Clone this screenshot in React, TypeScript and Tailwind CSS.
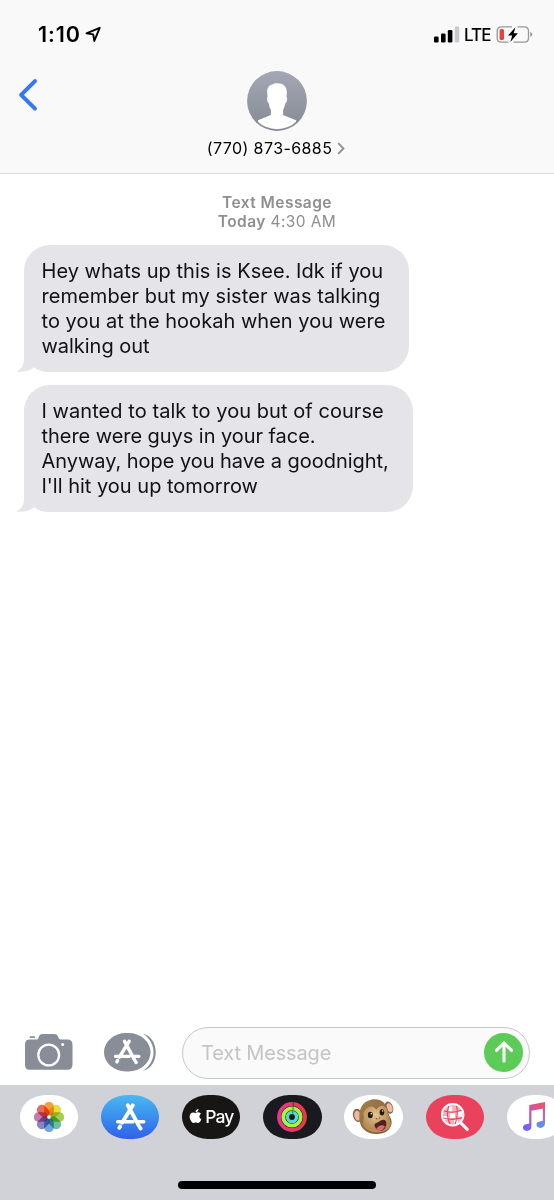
import type { ReactNode } from "react";
import { FaApple } from "react-icons/fa";

const petals = ["#f79320", "#ead725", "#9bc83c", "#5bb795", "#5d9ddb", "#7c78bb", "#bd6ba8", "#e8574a"];

function StatusBar() {
  return (
    <div className="flex h-[68px] items-center justify-between pl-[38px] pr-[21px]">
      <div className="flex items-center">
        <span className="w-[43px] whitespace-nowrap text-[21.5px] font-semibold leading-[25px] tracking-[0.9px]">1:10</span>
        <svg className="ml-[4px] h-[17px] w-[17px]" viewBox="0 0 17 17" fill="none">
          <path d="M1.5 7.4 14.7 1.8 9.3 14.9 8.2 8.4Z" stroke="#000" strokeWidth="1.9" strokeLinejoin="round" />
        </svg>
      </div>
      <div className="flex items-center">
        <svg className="h-[17px] w-[27px]" viewBox="0 0 27 17">
          <rect x="1" y="10.5" width="4.6" height="6" rx="1.3" />
          <rect x="8" y="7.5" width="4.6" height="9" rx="1.3" />
          <rect x="14.8" y="4" width="4.6" height="12.5" rx="1.3" />
          <rect x="21.8" y="0.5" width="4.4" height="16" rx="1.3" fill="#c9c9cb" />
        </svg>
        <span className="ml-[4px] mt-[1px] w-[27px] whitespace-nowrap text-[17px] font-medium leading-[20px] tracking-[-0.9px]">LTE</span>
        <svg className="ml-[5px] h-[19px] w-[37px]" viewBox="0 0 37 19" fill="none">
          <path d="M16 1.8H5.5Q1.2 1.8 1.2 6v7Q1.2 17.2 5.5 17.2H12.5M21.5 1.8h6.7Q32.5 1.8 32.5 6v7Q32.5 17.2 28.2 17.2H17.5" stroke="#98989b" strokeWidth="1.3" />
          <rect x="3.6" y="4" width="4.4" height="11" rx="1.6" fill="#ee4035" />
          <path d="M19.4 2.2 12 10.6h4.2L14.4 17l7.4-8.8h-4.1Z" fill="#000" />
          <path d="M34.3 7q2 .7 2 2.5t-2 2.5Z" fill="#98989b" />
        </svg>
      </div>
    </div>
  );
}

function Header() {
  return (
    <header className="h-[174px] border-b-[1.5px] border-[#dadadc] bg-[#f9f9f9]">
      <StatusBar />
      <div className="grid grid-cols-[1fr_160px_1fr]">
        <svg className="ml-[18px] mt-[10px] h-[34px] w-[21px]" viewBox="0 0 21 34" fill="none">
          <path d="M17 3.1 3.1 16.9 17 30.7" stroke="#3478f6" strokeWidth="4" strokeLinecap="round" strokeLinejoin="round" />
        </svg>
        <div className="flex flex-col items-center pt-[3px]">
          <svg className="h-[60px] w-[60px]" viewBox="0 0 60 60">
            <defs>
              <linearGradient id="avatar" x1="0" y1="0" x2="0" y2="1">
                <stop offset="0" stopColor="#a4a8b4" />
                <stop offset="1" stopColor="#858993" />
              </linearGradient>
              <clipPath id="inner"><circle cx="30" cy="30" r="28.2" /></clipPath>
            </defs>
            <circle cx="30" cy="30" r="29.9" fill="url(#avatar)" />
            <path clipPath="url(#inner)" fill="#fff" d="M30 12.2c7.2 0 10.6 4 9.7 11.3l-.3 2.6c1.2 0 1 5-1.2 6.4-.4 3-1.3 5-2.1 6.3v5.3l13 5.2V60H11V49.3l12.9-5.2v-5.3c-1-1.4-1.7-3.5-2-6.3-2.2-1.4-2.5-6.4-1.3-6.4l-.3-2.7c-.8-6.7 1.9-9.4 5-10 1.1-.8 3-1.2 4.7-1.2Z" />
          </svg>
          <div className="ml-[-2px] mt-[7px] flex items-center gap-[5px]">
            <span className="whitespace-nowrap text-[16px] leading-[20px] tracking-[0.42px]">(770) 873-6885</span>
            <svg className="h-[13px] w-[8px]" viewBox="0 0 8 13" fill="none"><path d="M1.2 1.1 6.5 6.5l-5.3 5.4" stroke="#8e8e93" strokeWidth="1.8" /></svg>
          </div>
        </div>
      </div>
    </header>
  );
}

function Bubble({ className, children }: { className: string; children: ReactNode }) {
  return (
    <div className={`relative ml-[24px] h-[126.5px] rounded-[26px] bg-[#e5e4e9] pl-[17.5px] pt-[14px] text-[20px] leading-[25px] text-[#111114] ${className}`}>
      <svg className="absolute bottom-0 left-[-8px] h-[34px] w-[34px]" viewBox="0 0 34 34">
        <path d="M8 0V21C8 27 5 31.5 .4 33.5 7 34.4 14 32.6 18.2 29.2 21.5 32 26 34 34 34V0Z" fill="#e5e4e9" />
      </svg>
      <div className="relative">{children}</div>
    </div>
  );
}

function StoreGlyph({ className }: { className: string }) {
  return (
    <svg className={className} viewBox="0 0 32 30" fill="none" stroke="#fff" strokeLinecap="round">
      <path d="M13.2 3.4 24.7 24.7M18.4 3.4 7.3 21.4M5.2 25.4l-.8 1.4M26 26.7l.4.8" strokeWidth="4" />
      <path d="M2.7 20.5h16M24 20.5h5.7" strokeWidth="3.6" />
    </svg>
  );
}

function Monkey() {
  return (
    <svg className="h-[38px] w-[43.3px]" viewBox="36 25 130 114">
      <defs>
        <linearGradient id="fur" x2="1" y2="1"><stop stopColor="#a5834b" /><stop offset=".4" stopColor="#957044" /><stop offset="1" stopColor="#75512f" /></linearGradient>
        <radialGradient id="face" cx=".45" cy=".35"><stop stopColor="#e6c68f" /><stop offset="1" stopColor="#b88d56" /></radialGradient>
      </defs>
      <ellipse cx="53" cy="77" rx="14" ry="20" fill="#8b6544" transform="rotate(-14 53 77)" />
      <ellipse cx="53" cy="78" rx="10" ry="15" fill="#edb9a6" transform="rotate(-14 53 78)" />
      <ellipse cx="147" cy="54" rx="12" ry="19" fill="#8b6544" transform="rotate(-20 147 54)" />
      <ellipse cx="149" cy="54" rx="8" ry="14" fill="#edb9a6" transform="rotate(-20 149 54)" />
      <path d="M93 30C122 25 139 38 144 66c4 17 14 23 10 39-4 17-20 27-43 28-29 1-51-15-53-44-2-32 9-54 35-59Z" fill="url(#fur)" />
      <path d="M79 57c11-11 24-8 30 3 7-12 20-16 28-7 7 8 4 16 8 25 6 13 11 24 4 35-10 15-39 20-59 11-17-7-23-19-20-31 1-6 2-9 2-13-6-8-1-16 7-23Z" fill="url(#face)" />
      <ellipse cx="91" cy="76" rx="7.5" ry="10" fill="#211a16" />
      <ellipse cx="126" cy="68" rx="7" ry="9.5" fill="#211a16" />
      <circle cx="94" cy="72" r="2.4" fill="#fff" /><circle cx="128" cy="64" r="2.2" fill="#fff" />
      <path d="m108 86 3 2m9-4-3 2" stroke="#684332" strokeWidth="3" strokeLinecap="round" />
      <path d="M107 101c8-2 14-10 22-11 9-1 12 9 9 19-4 13-16 18-24 13-7-4-15-17-7-21Z" fill="#4e2320" />
      <path d="M109 117c7-10 19-13 26-7-4 12-18 21-26 7Z" fill="#d46b6c" />
    </svg>
  );
}

function Pill({ className, children }: { className: string; children: ReactNode }) {
  return <div className={`flex h-[43.5px] w-[58.5px] shrink-0 items-center justify-center overflow-hidden rounded-[26px/21.75px] ${className}`}>{children}</div>;
}

function AppTray() {
  return (
    <div className="flex h-[115px] flex-col justify-between overflow-hidden bg-[#d1d2d8] pb-[11px] pt-[10px]">
      <div className="flex gap-[22.7px] pl-[19.6px]">
        <Pill className="bg-white">
          <svg className="h-[32px] w-[32px]" viewBox="-16 -16 32 32">
            {petals.map((color, i) => (
              <rect key={color} x="-4.8" y="-15" width="9.6" height="13.6" rx="4.4" fill={color} transform={`rotate(${i * 45})`} className="opacity-90 mix-blend-multiply" />
            ))}
            <circle r="1.5" fill="#fff" />
          </svg>
        </Pill>
        <Pill className="bg-linear-to-b from-[#4ab9ef] to-[#335fe8]"><StoreGlyph className="h-[29px] w-[31px]" /></Pill>
        <Pill className="bg-[#171615] text-white">
          <FaApple className="mt-[-2px] h-[16px] w-[13px] shrink-0" />
          <span className="ml-[3px] text-[17.5px] font-medium leading-[22px] tracking-[-0.9px]">Pay</span>
        </Pill>
        <Pill className="bg-[#191a1f]">
          <svg className="h-[32px] w-[32px]" viewBox="-16 -16 32 32" fill="none" strokeWidth="3.8">
            <defs>
              <linearGradient id="move"><stop stopColor="#eb358e" /><stop offset="1" stopColor="#e63a45" /></linearGradient>
              <linearGradient id="stand" x2="1"><stop stopColor="#54dcae" /><stop offset="1" stopColor="#54dce5" /></linearGradient>
            </defs>
            <circle r="13" stroke="url(#move)" />
            <circle r="8.7" stroke="#a9f345" />
            <circle r="4.6" stroke="url(#stand)" strokeWidth="3.4" />
            <path d="M1.2-15v4M1-10.7v3.6M.8-6v2.5" stroke="#191a1f" strokeWidth=".9" opacity=".65" />
          </svg>
        </Pill>
        <Pill className="bg-white"><Monkey /></Pill>
        <Pill className="bg-[#ea425c]">
          <svg className="h-[30px] w-[30px]" viewBox="0 0 30 30" fill="none">
            <circle cx="12.7" cy="12.8" r="10.8" fill="#f5b0ba" />
            <path d="M8.2 4.5h4v4.8h-4zM17 9.5h5v5h-5zM10 11h5v5h-5zM3.8 14h4.6v4H3.8zM14 17h4v5h-4z" fill="#fff" />
            <path d="M3.5 8.8Q12 12 22 8M2.5 15.8Q12 19 23 15.5M9 3.5Q5.5 13 10 22M16.3 3Q19 12 15 22.5" stroke="#ea425c" strokeWidth="1.1" />
            <circle cx="12.7" cy="12.8" r="10.8" stroke="#fff" strokeWidth="1.9" />
            <path d="m20.6 20.6 6.7 6.7" stroke="#fff" strokeWidth="3.1" strokeLinecap="round" />
          </svg>
        </Pill>
        <Pill className="bg-white">
          <svg className="ml-[-4px] h-[30px] w-[24px]" viewBox="0 0 25 31">
            <defs>
              <linearGradient id="noteTop" x1=".8" y1="0" x2=".3" y2="1"><stop stopColor="#ee5268" /><stop offset=".45" stopColor="#c359b7" /><stop offset="1" stopColor="#6b62f6" /></linearGradient>
              <linearGradient id="noteRight" x2="0" y2="1"><stop stopColor="#dd5789" /><stop offset=".6" stopColor="#8d79dd" /><stop offset="1" stopColor="#449cf6" /></linearGradient>
            </defs>
            <path d="M7.5 3.1 24 0V6.3L9.8 9V25c0 3.4-2 5-4.7 5C2.8 30 1 28.8 1 26.8c0-3.5 3.8-3.8 6.5-4.4Z" fill="url(#noteTop)" />
            <path d="M21.7 5H24v16.6c0 3.5-2 5.3-4.8 5.3-2.4 0-4.1-1.2-4.1-3.2 0-3.6 4-3.7 6.6-4.3Z" fill="url(#noteRight)" />
          </svg>
        </Pill>
      </div>
      <div className="h-[8px] w-[198px] self-center rounded-full bg-black" />
    </div>
  );
}

function Composer() {
  return (
    <div className="flex h-[65px] items-start pl-[24px] pt-[7px]">
      <svg className="mt-[6px] h-[38px] w-[50px]" viewBox="0 0 50 38">
        <path d="M6 6.5h6.3c1.2 0 1.7-.5 2.2-1.8.9-2.7 1.9-3.7 4.2-3.7H30c2.6 0 3.5 1 4.5 3.8.5 1.2 1 1.7 2.4 1.7H43c3.8 0 5.5 1.7 5.5 5.4v19.3c0 3.7-1.7 5.5-5.5 5.5H6c-3.5 0-5-1.7-5-5.5V12c0-3.7 1.5-5.5 5-5.5Z" fill="#888d98" />
        <rect x="5.6" y="3.2" width="5.5" height="1.9" rx=".9" fill="#888d98" />
        <circle cx="24.7" cy="22" r="10.4" fill="none" stroke="#fff" strokeWidth="2.3" />
        <circle cx="38.7" cy="11.5" r="1.5" fill="#fff" />
      </svg>
      <div className="relative ml-[30px] mt-[6px] flex h-[38.5px] w-[52px] items-center">
        <svg className="h-[38.5px] w-[52px]" viewBox="0 0 52 38.5">
          <rect width="46.5" height="38.5" rx="22" ry="19.25" fill="#888d98" />
          <path d="M39 .8c17 4 17 33 0 37C53 29 53 9.5 39 .8Z" fill="#888d98" />
        </svg>
        <StoreGlyph className="absolute left-[9px] top-[5px] h-[27px] w-[28px]" />
      </div>
      <div className="ml-[25.5px] flex h-[51.5px] w-[348.5px] items-center justify-between rounded-full border-[1.5px] border-[#c8c8cc] bg-[#fafafa] pl-[18.5px] pr-[6px]">
        <span className="whitespace-nowrap text-[20px] leading-[24px] tracking-[-0.15px] text-[#c4c4c7]">Text Message</span>
        <div className="mb-px flex h-[39px] w-[39px] items-center justify-center rounded-full bg-[#5dcb57]">
          <svg className="h-[24px] w-[22px]" viewBox="0 0 22 24" fill="none"><path d="M11 21V3.2M3.5 10.4 11 3l7.5 7.4" stroke="#fff" strokeWidth="3.1" strokeLinecap="round" strokeLinejoin="round" /></svg>
        </div>
      </div>
    </div>
  );
}

export default function App() {
  return (
    <div className="flex h-[1200px] w-[554px] flex-col overflow-hidden bg-white font-['Inter','Liberation_Sans',sans-serif] text-black">
      <Header />
      <main className="flex flex-1 flex-col">
        <div className="pt-[18.5px] text-center text-[15.5px] leading-[19.5px] text-[#8e8e93]">
          <div className="font-semibold tracking-[0.45px]">Text Message</div>
          <div className="tracking-[0.4px]"><span className="font-semibold">Today</span> 4:30 AM</div>
        </div>
        <div className="mt-[13.5px] flex flex-col gap-[13.5px]">
          <Bubble className="w-[385px]">
            <div className="whitespace-nowrap tracking-[0.03px]">Hey whats up this is Ksee. Idk if you</div>
            <div className="whitespace-nowrap tracking-[0.07px]">remember but my sister was talking</div>
            <div className="whitespace-nowrap tracking-[0.03px]">to you at the hookah when you were</div>
            <div className="whitespace-nowrap tracking-[-0.03px]">walking out</div>
          </Bubble>
          <Bubble className="w-[389px]">
            <div className="whitespace-nowrap tracking-[0.06px]">I wanted to talk to you but of course</div>
            <div className="whitespace-nowrap tracking-[-0.05px]">there were guys in your face.</div>
            <div className="whitespace-nowrap tracking-[-0.04px]">Anyway, hope you have a goodnight,</div>
            <div className="whitespace-nowrap tracking-[0px]">I'll hit you up tomorrow</div>
          </Bubble>
        </div>
      </main>
      <Composer />
      <AppTray />
    </div>
  );
}
